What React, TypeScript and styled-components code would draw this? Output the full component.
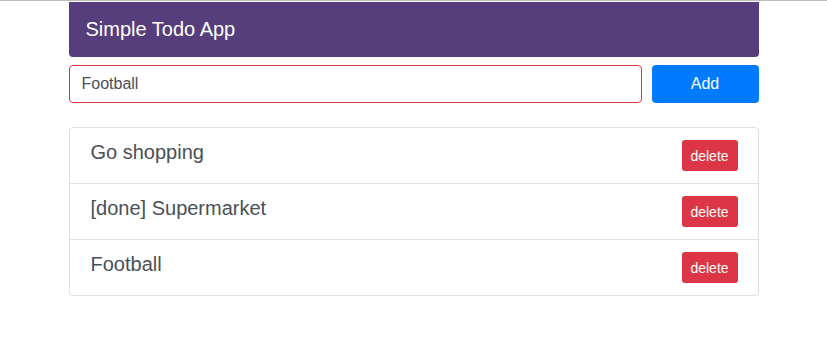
import React, { useState } from 'react';
import styled, { createGlobalStyle } from 'styled-components';

const GlobalStyle = createGlobalStyle`
  body {
    margin: 0;
    font-family: "Liberation Sans", Arial, sans-serif;
    color: #495057;
    background: #fff;
  }
  * { box-sizing: border-box; }
`;

const TopRule = styled.div`
  height: 1px;
  background: #bdbdbd;
  margin-bottom: 1px;
`;

const Container = styled.div`
  width: 720px;
  margin: 0 auto;
  padding: 0 15px;
`;

const Header = styled.header`
  height: 55px;
  display: flex;
  align-items: center;
  padding: 0 17px;
  background: #563d7c;
  color: #fff;
  font-size: 20px;
  border-radius: 0 0 4px 4px;
`;

const FormRow = styled.form`
  display: flex;
  gap: 10px;
  margin-top: 8px;
`;

const TextInput = styled.input`
  flex: 1;
  height: 38px;
  padding: 6px 12px;
  font-family: inherit;
  font-size: 16px;
  color: #495057;
  border: 1px solid #dc3545;
  border-radius: 4px;
  outline: none;
`;

const AddButton = styled.button`
  width: 107px;
  height: 38px;
  border: none;
  border-radius: 4px;
  background: #007bff;
  color: #fff;
  font-family: inherit;
  font-size: 16px;
`;

const List = styled.ul`
  list-style: none;
  margin: 24px 0 0;
  padding: 0;
  border: 1px solid rgba(0, 0, 0, 0.125);
  border-radius: 4px;
`;

const Item = styled.li`
  display: flex;
  justify-content: space-between;
  align-items: flex-start;
  padding: 12px 20px 12px 21px;
  & + & {
    border-top: 1px solid rgba(0, 0, 0, 0.125);
  }
`;

const ItemText = styled.span`
  font-size: 20px;
  line-height: 24px;
  color: #495057;
`;

const DeleteButton = styled.button`
  width: 56px;
  height: 31px;
  padding: 0;
  border: none;
  border-radius: 3px;
  background: #dc3545;
  color: #fff;
  font-family: inherit;
  font-size: 14px;
`;

export default function App() {
  const [value, setValue] = useState('Football');
  const [todos, setTodos] = useState([
    { id: 1, text: 'Go shopping', done: false },
    { id: 2, text: 'Supermarket', done: true },
    { id: 3, text: 'Football', done: false },
  ]);

  const onAdd = (e: React.FormEvent) => {
    e.preventDefault();
    if (!value.trim()) return;
    setTodos([...todos, { id: Date.now(), text: value, done: false }]);
    setValue('');
  };

  return (
    <>
      <GlobalStyle />
      <TopRule />
      <Container>
        <Header>Simple Todo App</Header>
        <FormRow onSubmit={onAdd}>
          <TextInput value={value} onChange={(e) => setValue(e.target.value)} />
          <AddButton type="submit">Add</AddButton>
        </FormRow>
        <List>
          {todos.map((t) => (
            <Item key={t.id}>
              <ItemText>{t.done ? `[done] ${t.text}` : t.text}</ItemText>
              <DeleteButton
                type="button"
                onClick={() => setTodos(todos.filter((x) => x.id !== t.id))}
              >
                delete
              </DeleteButton>
            </Item>
          ))}
        </List>
      </Container>
    </>
  );
}
